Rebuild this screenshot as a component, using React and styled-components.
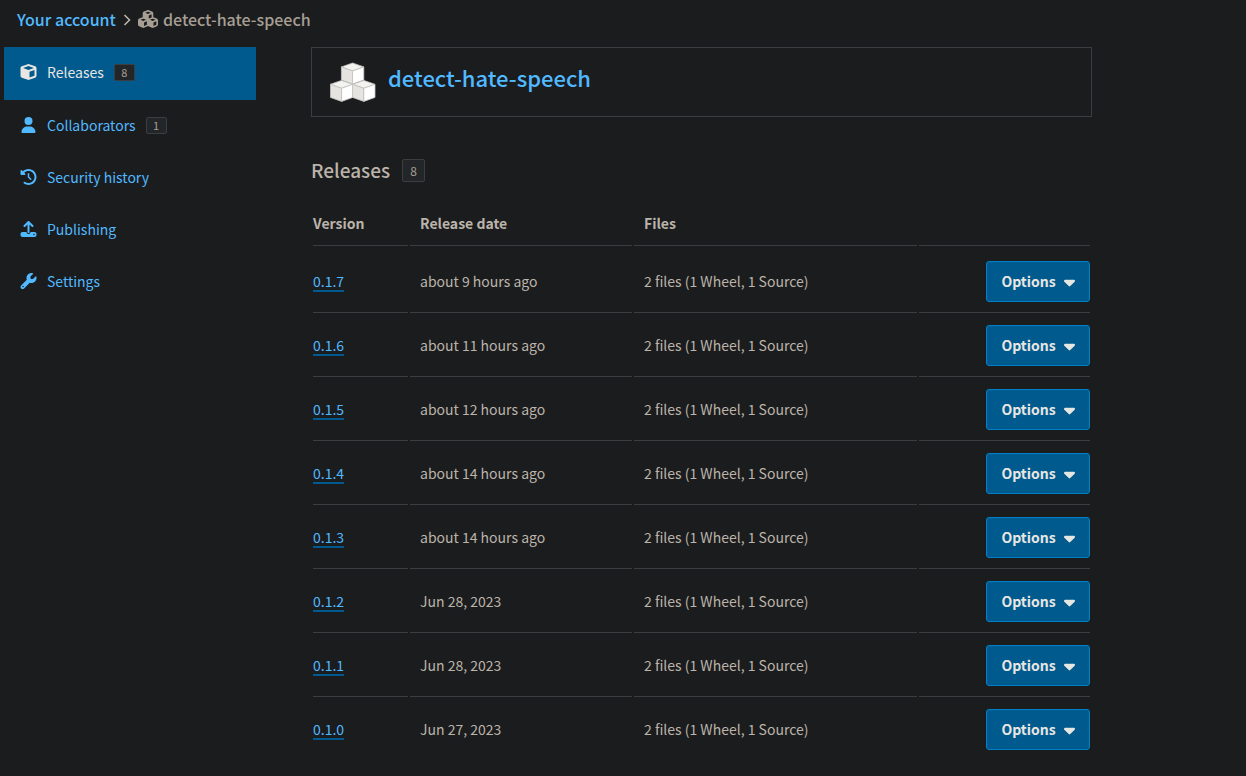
import React from 'react';
import styled, { createGlobalStyle } from 'styled-components';
import {
  FaCaretDown,
  FaClockRotateLeft,
  FaCube,
  FaCubes,
  FaUpload,
  FaUser,
  FaWrench,
} from 'react-icons/fa6';

const colors = {
  background: '#1b1c1e',
  text: '#bbb4aa',
  muted: '#a79f94',
  light: '#e8e6e3',
  link: '#51b9ff',
  primary: '#005a8d',
  primaryBorder: '#0080c8',
  border: '#3a3e41',
  badge: '#222628',
};

const GlobalStyle = createGlobalStyle`
  * {
    box-sizing: border-box;
  }
  body {
    margin: 0;
    background-color: ${colors.background};
    color: ${colors.text};
    font-family: 'Noto Sans CJK SC', 'Source Sans 3', sans-serif;
    font-size: 14px;
    line-height: 22px;
  }
  a {
    color: ${colors.link};
    text-decoration: none;
  }
`;

const Breadcrumbs = styled.nav`
  display: flex;
  align-items: center;
  height: 47px;
  padding: 0 17px 10px;
  font-size: 16px;
  font-weight: 500;
`;
const Separator = styled.svg`
  width: 8px;
  height: 12px;
  margin: 2px 7px 0;
  fill: none;
  stroke: ${colors.text};
  stroke-width: 1.6;
`;
const Crumb = styled.span`
  display: flex;
  align-items: center;
  gap: 5px;
  color: ${colors.muted};
  svg {
    width: 20px;
    height: 18px;
  }
`;
const Layout = styled.div`
  display: grid;
  grid-template-columns: 252px minmax(0, 1fr);
  column-gap: 55px;
  padding: 0 154px 20px 4px;
`;
const Tabs = styled.ul`
  margin: 0;
  padding: 0;
  list-style: none;
`;
const Tab = styled.a`
  display: flex;
  align-items: center;
  padding: 14px 16px 16px;
  ${({ $active }) =>
    $active &&
    `
    background-color: ${colors.primary};
    border-bottom: 1px solid ${colors.primary};
    color: ${colors.light};
  `};
  > svg {
    width: 17px;
    height: 16px;
    margin-right: 10px;
  }
`;
const Badge = styled.span`
  display: inline-block;
  min-width: ${({ $large }) => ($large ? '23px' : '21px')};
  margin-left: ${({ $large }) => ($large ? '12px' : '10px')};
  padding: 0 6px;
  border: 1px solid ${colors.border};
  border-radius: 2px;
  background-color: ${colors.badge};
  color: ${colors.muted};
  font-size: ${({ $large }) => ($large ? '12px' : '11px')};
  font-weight: 400;
  line-height: ${({ $large }) => ($large ? '21px' : '15px')};
  text-align: center;
`;
const Snippet = styled.header`
  display: flex;
  align-items: center;
  gap: 12px;
  height: 70px;
  padding: 0 18px;
  border: 1px solid ${colors.border};
`;
const PackageLogo = styled.svg`
  width: 46px;
  height: 40px;
  stroke: #c4c3c0;
  stroke-width: 0.8;
  stroke-linejoin: round;
`;
const PackageName = styled.h1`
  margin: 0;
  padding-bottom: 10px;
  font-size: 22px;
  font-weight: 500;
  line-height: 30px;
`;
const Title = styled.h2`
  display: flex;
  align-items: center;
  margin: 38px 0 16px;
  font-size: 19px;
  font-weight: 500;
  line-height: 30px;
`;
const Table = styled.table`
  width: 100%;
  table-layout: fixed;
  border-spacing: 2px;
`;
const HeadCell = styled.th`
  width: ${({ $width }) => $width};
  padding: 9px 10px 11px ${({ $first }) => ($first ? '0' : '10px')};
  border-bottom: 1px solid ${colors.border};
  font-weight: 700;
  text-align: left;
`;
const Cell = styled.td`
  padding: 10px 10px 12px;
  border-bottom: 1px solid ${colors.border};
  tr:first-child > & {
    padding-top: 13px;
  }
  tr:last-child > & {
    border-bottom: 0;
  }
`;
const VersionCell = styled(Cell).attrs({ as: 'th', scope: 'row' })`
  padding-left: 0;
  font-weight: 400;
  text-align: left;
  a {
    display: inline-block;
    border-bottom: 2px solid ${colors.primary};
    line-height: 18px;
  }
`;
const ActionCell = styled(Cell)`
  padding-right: 0;
  padding-bottom: 10px;
  text-align: right;
`;
const Button = styled.button`
  display: inline-flex;
  align-items: center;
  justify-content: center;
  gap: 8px;
  width: 104px;
  height: 41px;
  padding: 0 0 2px;
  border: 1px solid ${colors.primaryBorder};
  border-radius: 3px;
  background-color: ${colors.primary};
  color: ${colors.light};
  font: inherit;
  font-weight: 700;
  cursor: pointer;
  vertical-align: top;
  svg {
    width: 11px;
    height: 18px;
    margin-top: 3px;
  }
`;

const tabs = [
  { name: 'Releases', icon: FaCube, count: 8, active: true },
  { name: 'Collaborators', icon: FaUser, count: 1 },
  { name: 'Security history', icon: FaClockRotateLeft },
  { name: 'Publishing', icon: FaUpload },
  { name: 'Settings', icon: FaWrench },
];

const releases = [
  { version: '0.1.7', date: 'about 9 hours ago' },
  { version: '0.1.6', date: 'about 11 hours ago' },
  { version: '0.1.5', date: 'about 12 hours ago' },
  { version: '0.1.4', date: 'about 14 hours ago' },
  { version: '0.1.3', date: 'about 14 hours ago' },
  { version: '0.1.2', date: 'Jun 28, 2023' },
  { version: '0.1.1', date: 'Jun 28, 2023' },
  { version: '0.1.0', date: 'Jun 27, 2023' },
];

const Box = ({ x, y }) => (
  <g transform={`translate(${x} ${y})`}>
    <path d="M0 4.3 11.2 0.4 22.4 4.3 11.2 8.3Z" fill="#f3f3f0" />
    <path d="M0 4.3 11.2 8.3V21.4L0 17.4Z" fill="#e5e4e1" />
    <path d="M22.4 4.3 11.2 8.3V21.4L22.4 17.4Z" fill="#ffffff" />
  </g>
);

const App = () => (
  <>
    <GlobalStyle />
    <Breadcrumbs aria-label="Breadcrumb">
      <a href="#account">Your account</a>
      <Separator viewBox="0 0 8 12" aria-hidden="true">
        <path d="M1.5 1 6.5 6 1.5 11" />
      </Separator>
      <Crumb>
        <FaCubes />
        detect-hate-speech
      </Crumb>
    </Breadcrumbs>
    <Layout>
      <nav aria-label="Manage project">
        <Tabs>
          {tabs.map(({ name, icon: Icon, count, active }) => (
            <li key={name}>
              <Tab href="#releases" $active={active}>
                <Icon />
                {name}
                {count && <Badge>{count}</Badge>}
              </Tab>
            </li>
          ))}
        </Tabs>
      </nav>
      <main>
        <Snippet>
          <PackageLogo viewBox="0 0 46 40" aria-hidden="true">
            <Box x={11.4} y={0.6} />
            <Box x={0.4} y={18} />
            <Box x={22.6} y={18} />
          </PackageLogo>
          <PackageName>
            <a href="#project">detect-hate-speech</a>
          </PackageName>
        </Snippet>
        <Title>
          Releases
          <Badge $large>{releases.length}</Badge>
        </Title>
        <Table>
          <thead>
            <tr>
              <HeadCell scope="col" $first $width="95px">
                Version
              </HeadCell>
              <HeadCell scope="col" $width="222px">
                Release date
              </HeadCell>
              <HeadCell scope="col" $width="283px">
                Files
              </HeadCell>
              <HeadCell scope="col" aria-label="Options" />
            </tr>
          </thead>
          <tbody>
            {releases.map(({ version, date }) => (
              <tr key={version}>
                <VersionCell>
                  <a href="#release">{version}</a>
                </VersionCell>
                <Cell>{date}</Cell>
                <Cell>2 files (1 Wheel, 1 Source)</Cell>
                <ActionCell>
                  <Button type="button">
                    Options
                    <FaCaretDown />
                  </Button>
                </ActionCell>
              </tr>
            ))}
          </tbody>
        </Table>
      </main>
    </Layout>
  </>
);

export default App;
